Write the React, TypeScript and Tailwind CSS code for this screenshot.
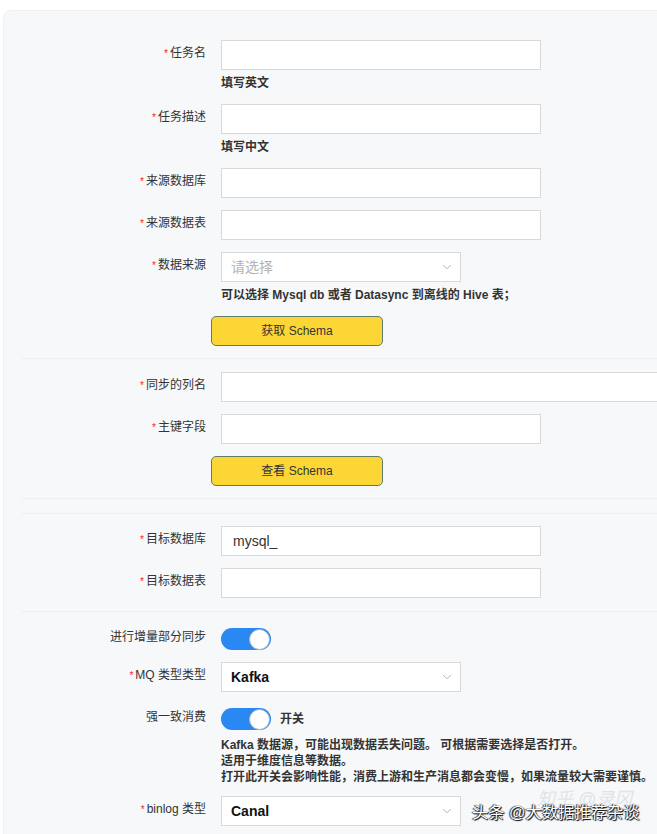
import { ChevronDown } from 'lucide-react';
import type { ReactNode } from 'react';

const font = { fontFamily: '"Liberation Sans", "Noto Sans CJK SC", sans-serif' };

function FormItem({
  label,
  required = false,
  children,
  compact = false,
}: {
  label?: string;
  required?: boolean;
  children: ReactNode;
  compact?: boolean;
}) {
  return (
    <div className="mb-[12px] flex items-start">
      <div
        className={`w-[217px] shrink-0 pr-[15px] text-right text-[12px] text-[#333] ${
          compact ? 'leading-[26px]' : 'leading-[27px]'
        }`}
      >
        {required && <span className="mr-[2px] text-[10px] text-[#f5222d]">*</span>}
        {label}
      </div>
      <div className="min-w-0 flex-1">{children}</div>
    </div>
  );
}

function TextInput({ value = '', width = 'w-[320px]' }: { value?: string; width?: string }) {
  return (
    <div
      className={`${width} flex h-[30px] items-center border border-[#d9d9d9] bg-white px-[11px] text-[14px] text-[#333]`}
    >
      {value}
    </div>
  );
}

function Select({ value, placeholder }: { value?: string; placeholder?: string }) {
  return (
    <div className="flex h-[30px] w-[240px] items-center justify-between border border-[#d9d9d9] bg-white pl-[9px] pr-[6px] text-[14px]">
      {value ? (
        <span className="font-bold text-[#111]">{value}</span>
      ) : (
        <span className="text-[#b3b3b3]">{placeholder}</span>
      )}
      <ChevronDown size={14} strokeWidth={1.5} className="text-[#aaa]" />
    </div>
  );
}

function Help({ children }: { children: ReactNode }) {
  return <div className="pt-[5px] pb-[1px] text-[12px] font-bold leading-[16px] text-[#333]">{children}</div>;
}

function Toggle() {
  return (
    <div className="mt-[4px] flex h-[22px] w-[50px] items-center justify-end rounded-full bg-[#2a88f3] pr-[1px]">
      <span className="h-[21px] w-[21px] rounded-full border border-[#a9b4c0] bg-white" />
    </div>
  );
}

function SchemaButton({ text }: { text: string }) {
  return (
    <div className="-ml-[10px] flex h-[30px] w-[172px] items-center justify-center rounded-[5px] border border-[#5e7b6c] bg-[#fcd634] text-[12px] text-[#333]">
      {text}
    </div>
  );
}

function Divider() {
  return <div className="ml-[18px] h-px bg-[#eceef1]" />;
}

export default function App() {
  return (
    <div className="relative h-[834px] w-[657px] overflow-hidden bg-white" style={font}>
      <div className="ml-[3px] mt-[10px] w-[720px] rounded-tl-[8px] border border-[#eef0f2] bg-[#f7f8fa] pt-[29px]">
        <FormItem label="任务名" required>
          <TextInput />
          <Help>填写英文</Help>
        </FormItem>
        <FormItem label="任务描述" required>
          <TextInput />
          <Help>填写中文</Help>
        </FormItem>
        <FormItem label="来源数据库" required>
          <TextInput />
        </FormItem>
        <FormItem label="来源数据表" required>
          <TextInput />
        </FormItem>
        <FormItem label="数据来源" required>
          <Select placeholder="请选择" />
          <Help>可以选择 Mysql db 或者 Datasync 到离线的 Hive 表；</Help>
        </FormItem>
        <FormItem>
          <SchemaButton text="获取 Schema" />
        </FormItem>

        <Divider />
        <div className="h-[13px]" />

        <FormItem label="同步的列名" required>
          <TextInput width="w-[480px]" />
        </FormItem>
        <FormItem label="主键字段" required>
          <TextInput />
        </FormItem>
        <FormItem>
          <SchemaButton text="查看 Schema" />
        </FormItem>

        <Divider />
        <div className="h-[14px]" />
        <Divider />
        <div className="h-[12px]" />

        <FormItem label="目标数据库" required>
          <TextInput value="mysql_" />
        </FormItem>
        <FormItem label="目标数据表" required>
          <TextInput />
        </FormItem>

        <div className="h-px" />
        <Divider />
        <div className="h-[12px]" />

        <FormItem label="进行增量部分同步" compact>
          <Toggle />
        </FormItem>
        <FormItem label="MQ 类型类型" required>
          <Select value="Kafka" />
        </FormItem>
        <div className="mb-[11px] flex items-start">
          <div className="w-[217px] shrink-0 pr-[15px] text-right text-[12px] leading-[26px] text-[#333]">
            强一致消费
          </div>
          <div className="min-w-0 flex-1">
            <div className="flex items-center gap-[9px]">
              <Toggle />
              <span className="mt-[4px] text-[12px] font-bold text-[#333]">开关</span>
            </div>
            <div className="mt-[7px] text-[12px] font-bold leading-[16px] text-[#333]">
              <div>Kafka 数据源，可能出现数据丢失问题。 可根据需要选择是否打开。</div>
              <div>适用于维度信息等数据。</div>
              <div className="whitespace-nowrap">
                打开此开关会影响性能，消费上游和生产消息都会变慢，如果流量较大需要谨慎。
              </div>
            </div>
          </div>
        </div>
        <FormItem label="binlog 类型" required>
          <Select value="Canal" />
        </FormItem>
      </div>

      <div className="pointer-events-none absolute left-[537px] top-[786px] text-[18px] italic text-[#dcdee3] opacity-80">
        知乎 @录冈
      </div>
      <div
        className="pointer-events-none absolute left-[472px] top-[800px] text-[16.3px] text-white"
        style={{ textShadow: '0 0 1px #000, 1px 1px 1px #000, -1px 0 1px #333' }}
      >
        头条 @大数据推荐杂谈
      </div>
    </div>
  );
}
